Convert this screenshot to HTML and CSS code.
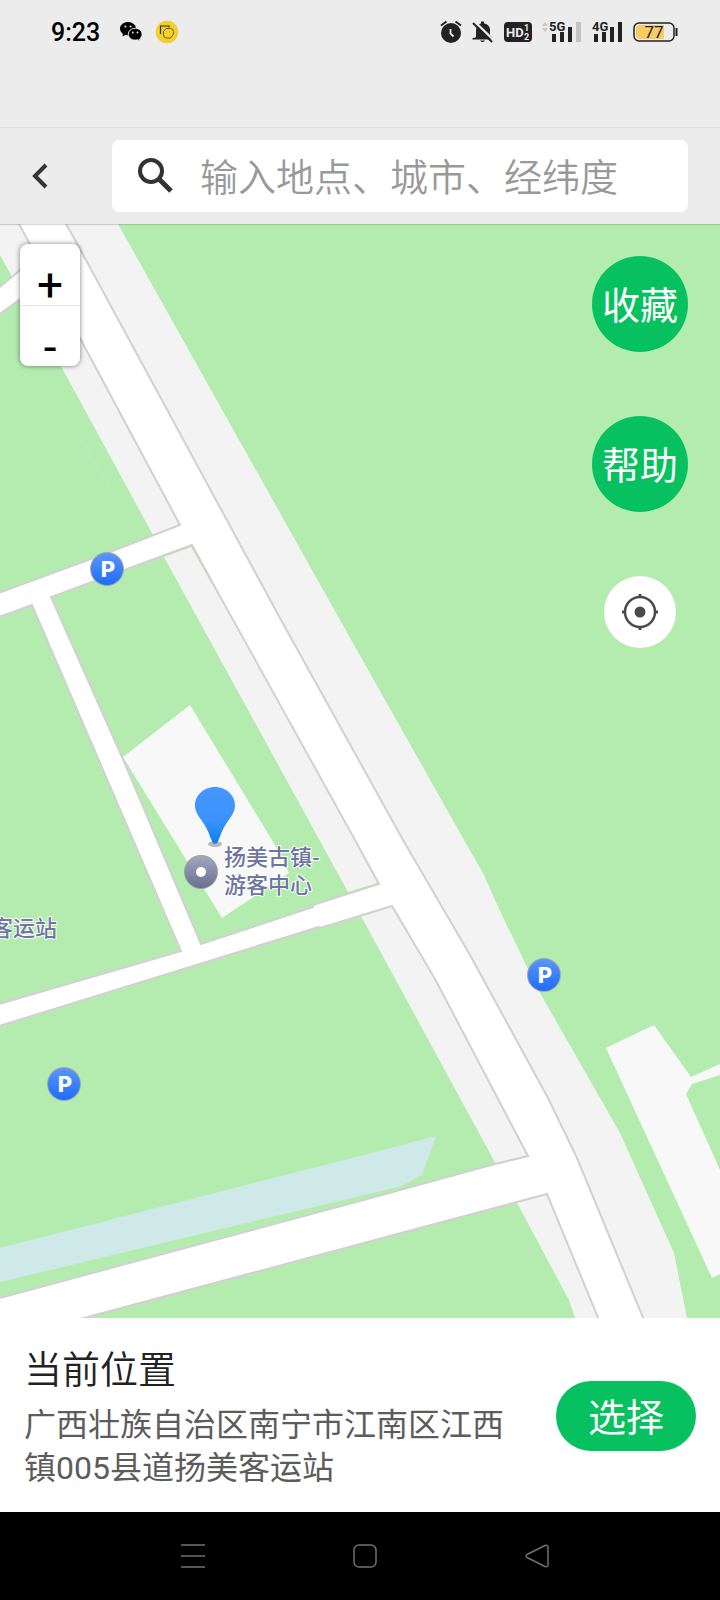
FILE: index.html
```
<!DOCTYPE html>
<html lang="zh-CN">
<head>
    <meta charset="UTF-8">
    <meta name="viewport" content="width=device-width, initial-scale=1.0">
    <title>选择位置</title>
    <link rel="stylesheet" href="styles.css">
</head>
<body>

    <!-- Status bar -->
    <div class="status-bar">
        <div class="status-row">
            <span class="time">9:23</span>
            <svg class="wechat" width="24" height="22" viewBox="0 0 24 22">
                <path d="M9 1C4.300 1 1 4 1 7.600c0 2.200 1 4 3 5.300l-.6 2.500 3-1.500c1 .3 2 .4 3.200.4C14 14.300 17 11.500 17 7.600 17 4 13.600 1 9 1z"/>
                <path d="M16.200 7.300c-4 0-6.900 2.600-6.900 5.900s2.900 5.900 6.900 5.900c.9 0 1.700-.1 2.500-.4l2.500 1.500-.5-2.300c1.500-1.100 2.400-2.800 2.400-4.700 0-3.300-2.900-5.900-6.900-5.900z" stroke="#ececec" stroke-width="1"/>
                <g fill="#ececec"><circle cx="6.500" cy="5.500" r="1"/><circle cx="11.500" cy="5.500" r="1"/><circle cx="13.800" cy="11.500" r=".9"/><circle cx="18.500" cy="11.500" r=".9"/></g>
            </svg>
            <svg width="24" height="24" viewBox="0 0 24 24">
                <circle cx="12" cy="12" r="11.200" fill="#f3cf2e"/>
                <path d="M5.500 14V6h8.500v1.500" fill="none" stroke="#3a2d08" stroke-width="1.200"/>
                <path d="M11 8.500h4.500q3 0 3 3V14l-3 4h-4q-3 0-3-3v-3.500z" fill="none" stroke="#6b5512" stroke-width=".9"/>
            </svg>
            <div class="status-icons">
                <svg width="22" height="24" viewBox="0 0 22 24">
                    <circle cx="11" cy="13" r="10" fill="#222"/>
                    <path d="M1 5.500L6.500 1.500M21 5.500L15.500 1.500" stroke="#222" stroke-width="2"/>
                    <path d="M10.500 9v4.500l3 3" fill="none" stroke="#ececec" stroke-width="1.800"/>
                </svg>
                <svg width="22" height="24" viewBox="0 0 22 24">
                    <path d="M4 17V10.500C4 6.500 6 4.200 9 3.500V1.500h3v2c4 .7 6 3 6 7V15l3 3v1.500H.5V18q3 0 3.500-1zM8 20.500h5q-2.500 3-5 0z" fill="#222"/>
                    <path d="M2 1L22 20.500" stroke="#ececec" stroke-width="2.400"/>
                    <path d="M1 3L20 22" stroke="#222" stroke-width="2"/>
                </svg>
                <svg class="bold" width="28" height="20" viewBox="0 0 28 20">
                    <rect width="28" height="20" rx="4" fill="#222"/>
                    <text x="2" y="15" font-size="13" fill="#ececec">HD</text>
                    <text x="20" y="9" font-size="9" fill="#ececec">1</text>
                    <text x="20" y="18" font-size="9" fill="#ececec">2</text>
                </svg>
                <svg class="bold" width="40" height="24" viewBox="0 0 40 24">
                    <path d="M0 6l3-4 3 4zM0 8l3 4 3-4z" fill="#c6c6c6"/>
                    <text x="7" y="11" font-size="13" fill="#222">5G</text>
                    <path d="M10 14h4v8h-4zM18 12h4v10h-4zM26 7h4v15h-4z" fill="#222"/>
                    <path d="M34 2h5v20h-5z" fill="#c4c4c4"/>
                </svg>
                <svg class="bold" width="31" height="24" viewBox="0 0 31 24">
                    <text x="0" y="11" font-size="13" fill="#222">4G</text>
                    <path d="M2 14h4v8H2zM10 12h4v10h-4zM18 7h4v15h-4zM26 2h4v20h-4z" fill="#222"/>
                </svg>
                <svg class="battery" width="45" height="20" viewBox="0 0 45 20">
                    <rect x="1" y="1" width="40" height="18" rx="5" fill="none" stroke="#222" stroke-width="1.500"/>
                    <path d="M7 3h24v14H7a4 4 0 0 1-4-4V7a4 4 0 0 1 4-4z" fill="#f8cb63"/>
                    <path d="M43.500 6v8" stroke="#222" stroke-width="2"/>
                    <text x="21" y="16" font-size="17" text-anchor="middle" fill="#222">77</text>
                </svg>
            </div>
        </div>
    </div>

    <!-- Search header -->
    <header class="header">
        <button class="back" type="button" aria-label="返回">
            <svg width="24" height="28" viewBox="0 0 24 28"><path d="M18 3L7 14l11 11" fill="none" stroke="#333" stroke-width="4"/></svg>
        </button>
        <form class="search">
            <svg width="36" height="36" viewBox="0 0 36 36" fill="none" stroke="#333">
                <circle cx="13" cy="13" r="11" stroke-width="4"/>
                <path d="M21.500 21.500L33 33" stroke-width="5"/>
            </svg>
            <input type="text" placeholder="输入地点、城市、经纬度" aria-label="搜索">
        </form>
    </header>

    <!-- Map -->
    <main class="map">
        <svg class="map-canvas" viewBox="0 224 720 1094" preserveAspectRatio="xMidYMid slice">
            <defs>
                <linearGradient id="parkFill" x1="0" y1="0" x2="0" y2="1">
                    <stop offset="0" stop-color="#5a97fb"/>
                    <stop offset="1" stop-color="#1f6bfb"/>
                </linearGradient>
                <linearGradient id="poiFill" x1="0" y1="0" x2="0" y2="1">
                    <stop offset="0" stop-color="#a3a8bd"/>
                    <stop offset="1" stop-color="#686f92"/>
                </linearGradient>
                <linearGradient id="pinFill" x1="0" y1="0" x2="0" y2="1">
                    <stop offset="0" stop-color="#4696ff"/>
                    <stop offset=".6" stop-color="#3b92fb"/>
                    <stop offset="1" stop-color="#0a7fe6"/>
                </linearGradient>
                <g id="parking">
                    <circle r="17" fill="#a2aaa5"/>
                    <circle r="16" fill="url(#parkFill)"/>
                    <text class="parking-letter" x="1" y="8" text-anchor="middle">P</text>
                </g>
            </defs>

            <!-- road verge -->
            <path fill="#f3f3f3" d="M0 224H118L340 620L464 840L483 873L500 911L527 967L540 993L620 1133L674 1253L687 1318H575L569 1300L517 1203L348 892L153 535L62 368L11 275L0 255z"/>
            <path d="M83 440L100 474L110 487" fill="none" stroke="#bcebd0"/>

            <!-- water and buildings -->
            <path fill="#cfe9e8" d="M0 1248L360 1156L436 1136L422 1175L402 1186L360 1196L0 1282z"/>
            <path fill="#f8f8f8" d="M606 1048L654 1025L691 1077L720 1064V1075L692 1084L686 1094L720 1170V1274L712 1278z"/>

            <!-- roads -->
            <path fill="#fff" stroke="#d2d0d2" stroke-width="2" d="M18 222L32 248L19 271L-4 290V317L32 290L56 292L81 340L180 525L110 552L-4 594V618L32 605L181 951L-4 1005V1027L319 927L320 928L392 906L435 979L528 1156L495 1164L360 1201L-4 1299V1342L84 1318L360 1244L517 1202L547 1194L599 1320H644L577 1158L548 1098L470 955L403 840L281 620L80 249L65 222z"/>
            <path fill="#b4ecaf" stroke="#d2d0d2" stroke-width="2" d="M192 545L51 597L122 757L201 944L313 907V905L379 884L355 840L222 600z"/>
            <path fill="#f3f3f3" d="M164 557L191 547L222 602L355 842L377 883L348 892z"/>
            <path fill="#f8f8f8" d="M190 705L275 845L289 873L222 918L123 757z"/>

            <!-- places -->
            <use href="#parking" x="107" y="569"/>
            <use href="#parking" x="544" y="975"/>
            <use href="#parking" x="64" y="1084"/>
            <circle cx="201" cy="872" r="17" fill="#9aa09f"/>
            <circle cx="201" cy="872" r="16" fill="url(#poiFill)"/>
            <circle cx="201" cy="872" r="5" fill="#fff"/>
            <text class="place" x="224" y="865">扬美古镇-</text>
            <text class="place" x="224" y="893">游客中心</text>
            <text class="place" x="57" y="936" text-anchor="end">客运站</text>

            <!-- current position -->
            <ellipse cx="215" cy="844" rx="7" ry="3" fill="#b9b6b6"/>
            <path fill="url(#pinFill)" d="M215 787c-12 0-20 9-20 18.500 0 5.500 3 10 6 14 4 5.500 7 11 9 17l2.500 6q2.500 2.500 5 0l2.500-6c2-6 5-11.500 9-17 3-4 6-8.500 6-14C235 796 227 787 215 787z"/>
        </svg>

        <div class="zoom">
            <button type="button" aria-label="放大">+</button>
            <button type="button" aria-label="缩小">-</button>
        </div>

        <div class="actions">
            <button class="action" type="button">收藏</button>
            <button class="action" type="button">帮助</button>
            <button class="locate" type="button" aria-label="定位">
                <svg width="38" height="38" viewBox="0 0 38 38" fill="none" stroke="#4a4a4a">
                    <circle cx="19" cy="19" r="15" stroke-width="2.500"/>
                    <path d="M19 1v4M19 33v4M1 19h4M33 19h4" stroke-width="3"/>
                    <circle cx="19" cy="19" r="5.500" fill="#4a4a4a" stroke="none"/>
                </svg>
            </button>
        </div>
    </main>

    <!-- Selected location -->
    <section class="location">
        <div class="location-info">
            <h2>当前位置</h2>
            <p>广西壮族自治区南宁市江南区江西镇005县道扬美客运站</p>
        </div>
        <button class="choose" type="button">选择</button>
    </section>

    <!-- System navigation -->
    <nav class="system-nav">
        <button type="button" aria-label="菜单">
            <svg width="26" height="26" viewBox="0 0 26 26"><path d="M1 2h24M1 13h24M1 24h24"/></svg>
        </button>
        <button type="button" aria-label="主页">
            <svg width="26" height="26" viewBox="0 0 26 26"><rect x="2" y="2" width="22" height="22" rx="5"/></svg>
        </button>
        <button type="button" aria-label="后退">
            <svg width="26" height="26" viewBox="0 0 26 26"><path d="M21 2.500L3 11.500q-2 1.500 0 3L21 23.500q3 1 3-2v-17q0-3-3-2z"/></svg>
        </button>
    </nav>

</body>
</html>
```
FILE: styles.css
```
* {
    box-sizing: border-box;
}
body {
    margin: 0;
    min-height: 100vh;
    display: flex;
    flex-direction: column;
    font-family: Roboto, "Noto Sans CJK SC", sans-serif;
    font-weight: 350;
    background-color: #ececec;
}
button {
    padding: 0;
    border: none;
    background: none;
    font: inherit;
    cursor: pointer;
}
svg {
    display: block;
    flex-shrink: 0;
}

/* Status bar */
.status-bar {
    height: 128px;
    border-bottom: 1px solid #dfdfdf;
}
.status-row {
    display: flex;
    align-items: center;
    height: 64px;
    padding: 0 42px 0 51px;
}
.time {
    font-size: 25px;
    font-weight: 500;
}
.wechat {
    margin: 0 12px 0 19px;
}
.status-icons {
    display: flex;
    align-items: center;
    gap: 10px;
    margin-left: auto;
}
.bold {
    font-family: Roboto, sans-serif;
    font-weight: 700;
}
.battery {
    font-weight: 400;
}

/* Header */
.header {
    display: flex;
    align-items: center;
    gap: 60px;
    padding: 12px 32px 12px 28px;
    position: relative;
    z-index: 1;
    background-color: #ececec;
    box-shadow: 0 1px 1px rgba(0, 0, 0, 0.15);
}
.search {
    flex: 1;
    min-width: 0;
    display: flex;
    align-items: center;
    gap: 26px;
    height: 72px;
    padding: 0 26px;
    background-color: white;
    border-radius: 8px;
}
.search input {
    flex: 1;
    min-width: 0;
    padding: 4px 0 0;
    border: none;
    outline: none;
    background: none;
    font: inherit;
    font-size: 38px;
    color: #333;
}
.search input::placeholder {
    color: #999;
    opacity: 1;
}

/* Map */
.map {
    flex: 1;
    position: relative;
    min-height: 600px;
    overflow: hidden;
    background-color: #b4ecaf;
}
.map-canvas {
    position: absolute;
    top: 0;
    left: 0;
    width: 100%;
    height: 100%;
}
.place {
    font-family: "Noto Sans CJK SC", sans-serif;
    font-size: 22px;
    font-weight: 500;
    fill: #6d76a0;
    stroke: white;
    stroke-width: 2px;
    stroke-linejoin: round;
    paint-order: stroke;
}
.parking-letter {
    font-family: Inter, sans-serif;
    font-size: 22px;
    font-weight: 800;
    fill: white;
}
.zoom {
    position: absolute;
    top: 20px;
    left: 20px;
    width: 60px;
    background-color: white;
    border-radius: 8px;
    box-shadow: 0 0 5px rgba(0, 0, 0, 0.5);
}
.zoom button {
    display: block;
    width: 100%;
    height: 61px;
    padding-top: 21px;
    font-size: 46px;
    font-weight: 400;
    line-height: 40px;
    color: black;
}
.zoom button + button {
    border-top: 1px solid #e4e4e4;
}
.actions {
    position: absolute;
    top: 32px;
    right: 32px;
    display: flex;
    flex-direction: column;
    align-items: center;
    gap: 64px;
}
.action {
    width: 96px;
    height: 96px;
    padding-bottom: 4px;
    border-radius: 50%;
    background-color: #07c160;
    font-size: 38px;
    font-weight: 400;
    color: white;
}
.locate {
    display: flex;
    align-items: center;
    justify-content: center;
    width: 72px;
    height: 72px;
    border-radius: 50%;
    background-color: white;
}

/* Location panel */
.location {
    display: flex;
    align-items: center;
    gap: 40px;
    padding: 24px 24px 22px;
    background-color: white;
}
.location-info {
    flex: 1;
    padding-top: 4px;
}
.location h2 {
    margin: 0 0 10px;
    font-size: 38px;
    font-weight: 350;
    line-height: 48px;
    color: #222;
}
.location p {
    margin: 0;
    font-size: 32px;
    font-weight: 400;
    line-height: 43px;
    color: #5c5c5c;
}
.choose {
    width: 140px;
    height: 70px;
    padding-bottom: 4px;
    border-radius: 35px;
    background-color: #07c160;
    font-size: 38px;
    font-weight: 400;
    color: white;
}

/* System navigation */
.system-nav {
    display: flex;
    align-items: center;
    justify-content: center;
    gap: 146px;
    height: 88px;
    padding-left: 10px;
    background-color: black;
}
.system-nav svg {
    fill: none;
    stroke: #707070;
    stroke-width: 1.5px;
}
```
